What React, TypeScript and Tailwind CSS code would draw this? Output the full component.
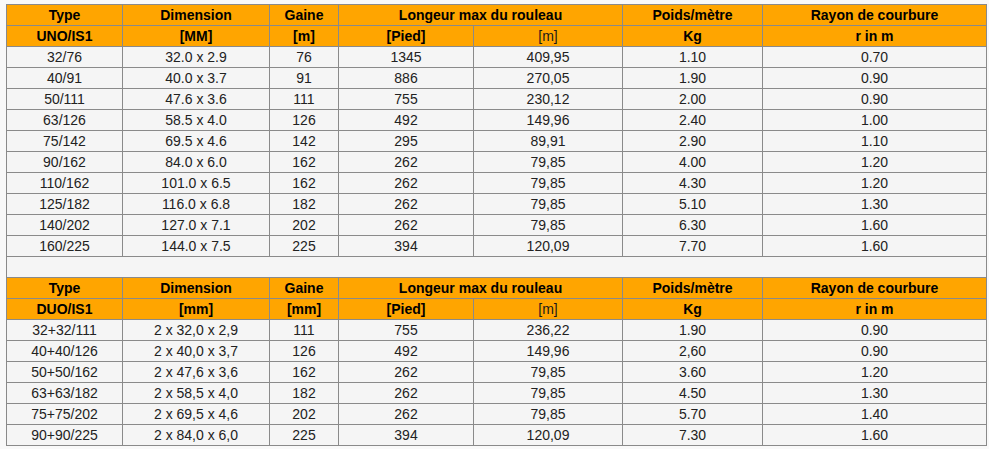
import React from 'react';

const uno = [
  ['32/76', '32.0 x 2.9', '76', '1345', '409,95', '1.10', '0.70'],
  ['40/91', '40.0 x 3.7', '91', '886', '270,05', '1.90', '0.90'],
  ['50/111', '47.6 x 3.6', '111', '755', '230,12', '2.00', '0.90'],
  ['63/126', '58.5 x 4.0', '126', '492', '149,96', '2.40', '1.00'],
  ['75/142', '69.5 x 4.6', '142', '295', '89,91', '2.90', '1.10'],
  ['90/162', '84.0 x 6.0', '162', '262', '79,85', '4.00', '1.20'],
  ['110/162', '101.0 x 6.5', '162', '262', '79,85', '4.30', '1.20'],
  ['125/182', '116.0 x 6.8', '182', '262', '79,85', '5.10', '1.30'],
  ['140/202', '127.0 x 7.1', '202', '262', '79,85', '6.30', '1.60'],
  ['160/225', '144.0 x 7.5', '225', '394', '120,09', '7.70', '1.60'],
];

const duo = [
  ['32+32/111', '2 x 32,0 x 2,9', '111', '755', '236,22', '1.90', '0.90'],
  ['40+40/126', '2 x 40,0 x 3,7', '126', '492', '149,96', '2,60', '0.90'],
  ['50+50/162', '2 x 47,6 x 3,6', '162', '262', '79,85', '3.60', '1.20'],
  ['63+63/182', '2 x 58,5 x 4,0', '182', '262', '79,85', '4.50', '1.30'],
  ['75+75/202', '2 x 69,5 x 4,6', '202', '262', '79,85', '5.70', '1.40'],
  ['90+90/225', '2 x 84,0 x 6,0', '225', '394', '120,09', '7.30', '1.60'],
];

const th = 'border border-[#8a8a8a] bg-[#ffa500] h-[20px] p-0 text-center font-bold text-[14px] leading-[20px] text-black';
const thLight = 'border border-[#8a8a8a] bg-[#ffa500] h-[20px] p-0 text-center font-normal text-[14px] leading-[20px] text-[#1a1a1a]';
const td = 'border border-[#8a8a8a] h-[20px] p-0 text-center text-[14px] leading-[20px] text-[#222]';

function Head({ kind, mm, gaine }: { kind: string; mm: string; gaine: string }) {
  return (
    <>
      <tr>
        <th className={th}>Type</th>
        <th className={th}>Dimension</th>
        <th className={th}>Gaine</th>
        <th className={th} colSpan={2}>Longeur max du rouleau</th>
        <th className={th}>Poids/mètre</th>
        <th className={th}>Rayon de courbure</th>
      </tr>
      <tr>
        <th className={th}>{kind}</th>
        <th className={th}>{mm}</th>
        <th className={th}>{gaine}</th>
        <th className={th}>[Pied]</th>
        <th className={thLight}>[m]</th>
        <th className={th}>Kg</th>
        <th className={th}>r in m</th>
      </tr>
    </>
  );
}

export default function App() {
  return (
    <div className="min-h-screen bg-[#f9f9f9] pt-[4px] pl-[6px]" style={{ fontFamily: '"Liberation Sans", Arial, sans-serif' }}>
      <table className="table-fixed border-collapse w-[980px] bg-[#f5f5f5]">
        <colgroup>
          <col className="w-[116px]" />
          <col className="w-[147px]" />
          <col className="w-[69px]" />
          <col className="w-[135px]" />
          <col className="w-[149px]" />
          <col className="w-[140px]" />
          <col className="w-[224px]" />
        </colgroup>
        <tbody>
          <Head kind="UNO/IS1" mm="[MM]" gaine="[m]" />
          {uno.map((r, i) => (
            <tr key={'u' + i}>
              {r.map((c, j) => (
                <td key={j} className={td}>{c}</td>
              ))}
            </tr>
          ))}
          <tr>
            <td colSpan={7} className={td}>&nbsp;</td>
          </tr>
          <Head kind="DUO/IS1" mm="[mm]" gaine="[mm]" />
          {duo.map((r, i) => (
            <tr key={'d' + i}>
              {r.map((c, j) => (
                <td key={j} className={td}>{c}</td>
              ))}
            </tr>
          ))}
        </tbody>
      </table>
    </div>
  );
}
